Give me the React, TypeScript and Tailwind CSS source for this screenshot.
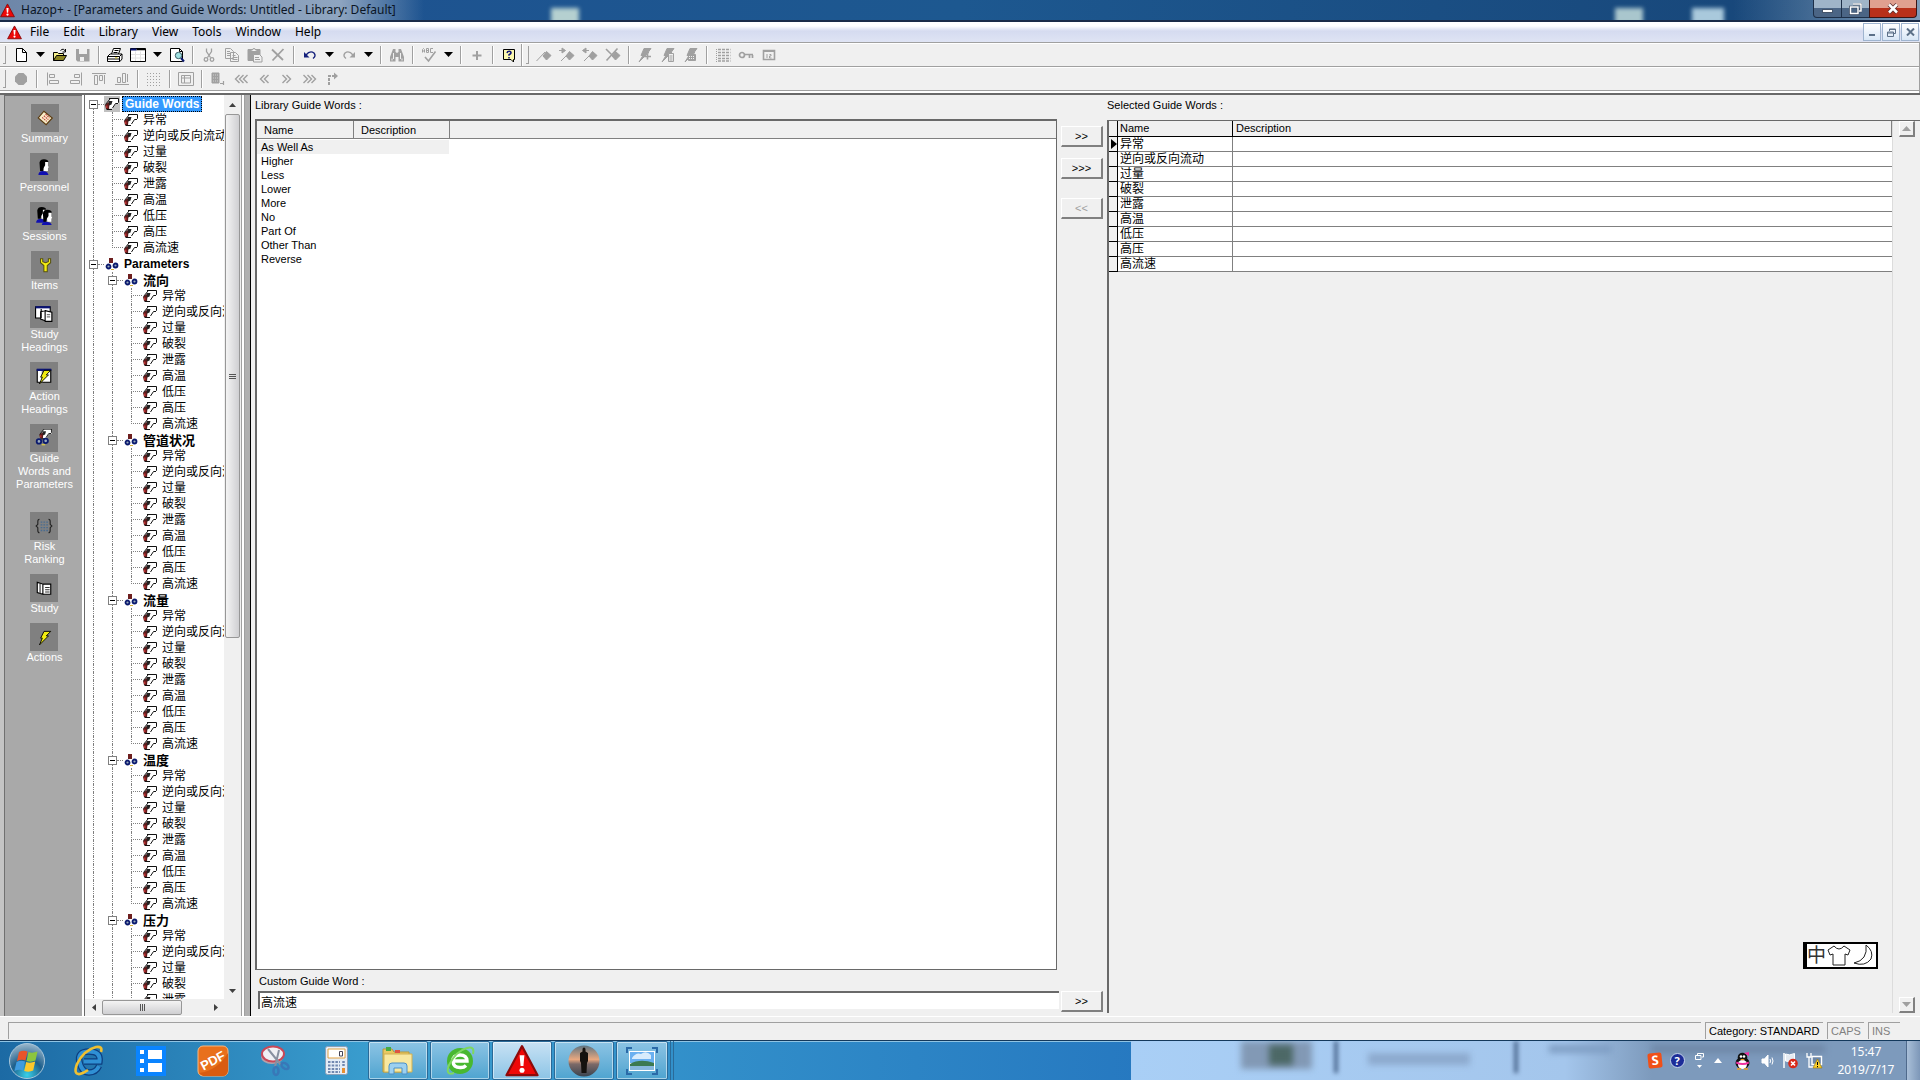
import { ReactNode, useState } from "react";
import clsx from "clsx";

const GUIDE_WORDS = ["异常", "逆向或反向流动", "过量", "破裂", "泄露", "高温", "低压", "高压", "高流速"];
const PARAMETERS = ["流向", "管道状况", "流量", "温度", "压力"];
const LIBRARY_WORDS = ["As Well As", "Higher", "Less", "Lower", "More", "No", "Part Of", "Other Than", "Reverse"];
const MENUS = ["File", "Edit", "Library", "View", "Tools", "Window", "Help"];

interface IconProps {
    children: ReactNode;
    size?: number;
    className?: string;
}

// 16x16 pixel style icon, grey by default like the disabled toolbar buttons
const Icon = ({ children, size = 16, className = "text-[#a0a0a0]" }: IconProps) => (
    <svg
        width={size}
        height={size}
        viewBox="0 0 16 16"
        fill="none"
        stroke="currentColor"
        strokeWidth="1"
        className={clsx("shrink-0", className)}
        aria-hidden="true"
    >
        {children}
    </svg>
);

const WarningIcon = ({ size }: { size: number }) => (
    <svg width={size} height={size} viewBox="0 0 24 24" className="shrink-0" aria-hidden="true">
        <path d="M12 1.500 23 22H1Z" fill="#ee0808" stroke="#8d0a0a" strokeWidth="1.5" strokeLinejoin="round" />
        <path d="M10.300 8h3.400l-.7 7.500h-2Z" fill="#fff" />
        <circle cx="12" cy="18.500" r="1.800" fill="#fff" />
    </svg>
);

const WordShape = () => (
    <>
        <path d="M6 3h9v4l-1 1h-2.500L8.500 12.500H2V8.500Z" fill="#fff" stroke="none" />
        <path d="M5 2.500h9.500v4l-1 1M14 7.500h-2.500L8.500 12" stroke="#111" />
        <path d="M1 9l3.500-3 1 2-.5 5H2Z" fill="#5e1a1a" stroke="none" />
        <path d="M4.500 5h4l-1 3.500L5 9.500Z" fill="#222" stroke="none" />
        <path d="M2 9.500h1.500v2.500H2Z" fill="#b33" stroke="none" />
        <path d="M1.500 8.500 6 3M2.500 13.500h5.500" stroke="#111" />
    </>
);

const WordIcon = () => (
    <Icon>
        <WordShape />
    </Icon>
);

const ParamIcon = () => (
    <Icon>
        <path d="M5 2h4v5H5Z" fill="#6d1f1f" stroke="none" />
        <circle cx="4.500" cy="10.500" r="2" fill="#9ab" stroke="#0b1a6e" strokeWidth="1.800" />
        <circle cx="11.500" cy="9.500" r="2" fill="#9ab" stroke="#0b1a6e" strokeWidth="1.800" />
        <path d="M7 13.500h3" stroke="#d8b53a" />
    </Icon>
);

interface ToolButtonProps {
    label: string;
    children: ReactNode;
}

const ToolButton = ({ label, children }: ToolButtonProps) => (
    <button aria-label={label} className="flex h-5 w-[23px] shrink-0 items-center justify-center">
        {children}
    </button>
);

const ToolArrow = () => (
    <button aria-label="More options" className="flex h-5 w-4 shrink-0 items-center justify-center">
        <svg width="9" height="5" viewBox="0 0 9 5">
            <path d="M0 0h9L4.500 5Z" fill="#000" />
        </svg>
    </button>
);

const ToolSeparator = () => (
    <span className="flex w-[9px] shrink-0 justify-center">
        <span className="h-[18px] w-[2px] border-l border-[#a0a0a0] bg-white" />
    </span>
);

const ToolGrip = () => <span className="mr-[3px] h-[18px] w-[3px] shrink-0 border-r border-b border-[#a0a0a0]" />;

const Chevrons = ({ count, left }: { count: number; left?: boolean }) => (
    <Icon>
        {Array.from({ length: count }, (_, i) => {
            const x = 7.5 - count * 2 + i * 4;
            return <path key={i} d={left ? `M${x + 5} 4l-4 4 4 4` : `M${x} 4l4 4-4 4`} strokeWidth="1.400" />;
        })}
    </Icon>
);

const Diamond = ({ children }: { children?: ReactNode }) => (
    <Icon>
        <path d="M10.500 4.500l4.500 4-4.500 4.500L7 9Z" fill="currentColor" />
        {children}
    </Icon>
);

const Bolt = ({ children }: { children: ReactNode }) => (
    <Icon>
        <path d="M7 1.500h7L11 5.500h1L8 9l-6 6 4-6.500H4Z" fill="currentColor" />
        {children}
    </Icon>
);

const MainToolbar = () => (
    <div className="flex h-6 items-center border-t border-[#a0a0a0] pl-[3px] shadow-[inset_0_1px_0_#fff]">
        <ToolGrip />
        <ToolButton label="New">
            <Icon className="text-black">
                <path d="M3.500 1.500h6l4 4v9h-10Z" fill="#fff" />
                <path d="M9.500 1.500v4h4" />
            </Icon>
        </ToolButton>
        <ToolArrow />
        <ToolButton label="Open">
            <Icon className="text-black">
                <path d="M1.500 13.500v-8h4l1 1h5v2" fill="#f5f08a" />
                <path d="M1.500 13.500 4.500 8.500h10l-3 5Z" fill="#8b8420" />
                <path d="M8.500 3.500q3-3 5 1M13.500 2v3h-3" />
            </Icon>
        </ToolButton>
        <ToolButton label="Save">
            <Icon>
                <path d="M1 2h13.500v12.500H2.500L1 13Z" fill="currentColor" stroke="none" />
                <path d="M4 2h8v5H4ZM5 10h4v4H5Z" fill="#f0f0f0" stroke="none" />
            </Icon>
        </ToolButton>
        <ToolSeparator />
        <ToolButton label="Print">
            <Icon className="text-black">
                <path d="M4.500 7 6.500 1.500h7l-2 5.500" fill="#fff" />
                <path d="M7.500 3.500h4M6.500 5.500h4" />
                <path d="M.5 9.500 3 7h12v5l-2 2.500H.5Z" fill="#fff" />
                <path d="M.5 9.500h12l2.500-2.500M.5 12h12M12.500 9.500v5" />
                <path d="M8 10.800h2.500" stroke="#d8c820" />
            </Icon>
        </ToolButton>
        <ToolButton label="Table">
            <Icon className="text-black">
                <path d="M.5 1.500h15v13H.5Z" fill="#fff" />
                <path d="M.5 2.500h6" stroke="#0b1474" strokeWidth="2" />
                <path d="M6.500 2.500h9" strokeWidth="1.500" />
                <path d="M5.500 4.500v9.500M10.500 4.500v9.500M1 7.500h14M1 11h14" stroke="#e2e2e2" />
            </Icon>
        </ToolButton>
        <ToolArrow />
        <ToolButton label="Preview">
            <Icon className="text-black">
                <path d="M1.500 1.500h9l3 3v10h-12Z" fill="#fff" />
                <path d="M10.500 1.500v3h3" />
                <circle cx="9.500" cy="8.500" r="3.200" fill="#9fe0e0" stroke="#3c5d66" />
                <path d="M12 11l3 3.500" stroke="#0b1a6e" strokeWidth="2" />
            </Icon>
        </ToolButton>
        <ToolSeparator />
        <ToolButton label="Cut">
            <Icon>
                <path d="M5.500 1.500v3l4 6M10.500 1.500v3l-4 6" strokeWidth="1.300" />
                <circle cx="5" cy="12.500" r="1.800" strokeWidth="1.300" />
                <circle cx="11" cy="12.500" r="1.800" strokeWidth="1.300" />
            </Icon>
        </ToolButton>
        <ToolButton label="Copy">
            <Icon>
                <path d="M1.500 1.500h5l3 3v7h-8ZM6.500 5.500h5l3 3v6h-8Z" fill="#f0f0f0" />
                <path d="M3 4.500h3M3 6.500h3M3 8.500h3M8.500 8.500h3M8.500 10.500h5M8.500 12.500h5" />
            </Icon>
        </ToolButton>
        <ToolButton label="Paste">
            <Icon>
                <path d="M1 2.500h12v11H1Z" fill="currentColor" />
                <path d="M4 4.500h6V3H8.500a1.500 1.500 0 0 0-3 0H4Z" fill="#f0f0f0" />
                <path d="M6.500 7.500h6l2.500 2.500v5H6.500Z" fill="#f0f0f0" />
                <path d="M8 10.500h4M8 12.500h5" />
            </Icon>
        </ToolButton>
        <ToolButton label="Delete">
            <Icon>
                <path d="M2 2.500 13 13M13.500 2 2.500 13.500" strokeWidth="1.800" />
            </Icon>
        </ToolButton>
        <ToolSeparator />
        <ToolButton label="Undo">
            <Icon className="text-[#14207c]">
                <path d="M4 8Q8 3 12 6q2.500 3-1 5.500" strokeWidth="1.400" />
                <path d="M2 5v5.500h5.500Z" fill="currentColor" stroke="none" />
            </Icon>
        </ToolButton>
        <ToolArrow />
        <ToolButton label="Redo">
            <Icon>
                <path d="M12 8Q8 3 4 6q-2.500 3 1 5.500" strokeWidth="1.400" />
                <path d="M14 5v5.500H8.500Z" fill="currentColor" stroke="none" />
            </Icon>
        </ToolButton>
        <ToolArrow />
        <ToolSeparator />
        <ToolButton label="Find">
            <Icon>
                <path d="M4 2h2.500v3L8 6l1.500-1V2H12l3 8v4.500H9.500V10h-3v4.500H1V10Z" fill="currentColor" stroke="none" />
                <path d="M4.500 6v6M11.500 6v6M3 11.500v2M13 11.500v2" stroke="#f0f0f0" />
            </Icon>
        </ToolButton>
        <ToolSeparator />
        <ToolButton label="Spelling">
            <Icon>
                <path d="M1.500 5.500v-3l1-1 1 1v3M1.500 4h2M5.500 5.500v-4h2v4ZM5.500 3.500h2M12 1.500H9.500v4H12" />
                <path d="M4 10l3.500 4L14.500 4.500" strokeWidth="1.600" />
            </Icon>
        </ToolButton>
        <ToolArrow />
        <ToolSeparator />
        <ToolButton label="Add">
            <Icon>
                <path d="M8 4v9M3.500 8.500h9" strokeWidth="2" />
            </Icon>
        </ToolButton>
        <ToolSeparator />
        <ToolButton label="Help">
            <Icon className="text-black">
                <path d="M2.500 2.500h11v10h-1V15l-2.500-2.500H2.500Z" fill="#fbf8b0" />
                <path d="M6 6q.3-1.700 2.300-1.700Q10.200 4.300 10 6q-.2 1-2 1.800v1M8 10v1.500" strokeWidth="1.500" stroke="#10157a" />
            </Icon>
        </ToolButton>
        <span className="mr-[3px] ml-px h-[22px] w-[2px] border-l border-[#a0a0a0] bg-white" />
        <ToolGrip />
        <ToolButton label="Insert node">
            <Diamond>
                <path d="M.5 14 9 5" />
            </Diamond>
        </ToolButton>
        <ToolButton label="Next node">
            <Diamond>
                <path d="M0 3.500h4M2 14l9-9" />
                <path d="M3 1 6.500 3.500 3 6Z" fill="currentColor" />
            </Diamond>
        </ToolButton>
        <ToolButton label="Previous node">
            <Diamond>
                <path d="M3 3.500h4M2 14l9-9" />
                <path d="M4 1 .5 3.500 4 6Z" fill="currentColor" />
            </Diamond>
        </ToolButton>
        <ToolButton label="Remove node">
            <Diamond>
                <path d="M1 2l9 9M12.500 1.500 1.500 13.500" strokeWidth="1.600" />
            </Diamond>
        </ToolButton>
        <ToolSeparator />
        <ToolButton label="New action">
            <Bolt>
                <path d="M6 9.500h8M10.500 7v5.500" strokeWidth="1.600" />
            </Bolt>
        </ToolButton>
        <ToolButton label="Action list">
            <Bolt>
                <path d="M8.500 6.500h5v8h-5Z" fill="#f0f0f0" />
                <path d="M9.500 9h3M9.500 11h3M9.500 13h3" />
            </Bolt>
        </ToolButton>
        <ToolButton label="Action grid">
            <Bolt>
                <path d="M5.500 7.500h7v6h-7Z" fill="currentColor" />
                <path d="M6 9.500h6M6 11.500h6" stroke="#f0f0f0" strokeDasharray="1 1" />
            </Bolt>
        </ToolButton>
        <ToolSeparator />
        <ToolButton label="Worksheet">
            <Icon>
                <path d="M3 2.500h12.500M3 5.500h12.500M3 8.500h12.500M3 11.500h12.500M3 14h12.500" strokeDasharray="3 1" strokeWidth="1.400" />
                <path d="M1.500 2v13" strokeDasharray="1 1" />
            </Icon>
        </ToolButton>
        <ToolButton label="Key">
            <Icon>
                <circle cx="4" cy="8" r="2.500" strokeWidth="1.700" />
                <path d="M6.500 7.500H15M11.500 8v3M14.500 8v3" strokeWidth="1.700" />
            </Icon>
        </ToolButton>
        <ToolButton label="Calendar">
            <Icon>
                <path d="M2.500 3.500h11v9h-11Z" strokeWidth="1.600" />
                <path d="M2 4h12" strokeWidth="2" />
                <path d="M6 7v4M8.500 7.500H10V9H8.500v2H10.500" />
            </Icon>
        </ToolButton>
    </div>
);

const FormatToolbar = () => (
    <div className="flex h-6 items-center border-t border-[#a0a0a0] pl-[3px] shadow-[inset_0_1px_0_#fff]">
        <ToolGrip />
        <ToolButton label="Record">
            <Icon>
                <path d="M5.500 2h5L14 5.500v5L10.500 14h-5L2 10.500v-5Z" fill="currentColor" stroke="none" />
            </Icon>
        </ToolButton>
        <ToolSeparator />
        <ToolButton label="Align left">
            <Icon>
                <path d="M2.500 1.500v13M4.500 3.500h5v3h-5ZM4.500 9.500h9v3h-9Z" />
            </Icon>
        </ToolButton>
        <ToolButton label="Align right">
            <Icon>
                <path d="M13.500 1.500v13M6.500 3.500h5v3h-5ZM2.500 9.500h9v3h-9Z" />
            </Icon>
        </ToolButton>
        <ToolButton label="Align top">
            <Icon>
                <path d="M1 2.500h14M3.500 4.500h3v9h-3ZM8.500 4.500h3v5h-3ZM13.500 4v9" />
            </Icon>
        </ToolButton>
        <ToolButton label="Align bottom">
            <Icon>
                <path d="M1 13.500h14M3.500 6.500h3v5h-3ZM8.500 2.500h3v9h-3ZM13.500 3v8" />
            </Icon>
        </ToolButton>
        <ToolSeparator />
        <ToolButton label="Grid">
            <Icon>
                <path d="M1 2.500h14M1 5.500h14M1 8.500h14M1 11.500h14M1 14.500h14" strokeDasharray="1 2" />
            </Icon>
        </ToolButton>
        <ToolSeparator />
        <ToolButton label="Frame">
            <Icon>
                <path d="M.5 1.500h15v13H.5Z" />
                <path d="M3.500 4.500h9v7.500h-9ZM3.500 7h9M6.500 4.500V12" />
            </Icon>
        </ToolButton>
        <ToolSeparator />
        <ToolButton label="Fill">
            <Icon>
                <path d="M2 2h7v10H2Z" fill="currentColor" />
                <path d="M3 4h5M3 7h5M3 10h5" stroke="#d0d0d0" strokeDasharray="1 1" />
                <path d="M10 12.500h4M13.500 10v4" strokeWidth="1.200" />
            </Icon>
        </ToolButton>
        <ToolButton label="First">
            <Chevrons count={3} left />
        </ToolButton>
        <ToolButton label="Previous">
            <Chevrons count={2} left />
        </ToolButton>
        <ToolButton label="Next">
            <Chevrons count={2} />
        </ToolButton>
        <ToolButton label="Last">
            <Chevrons count={3} />
        </ToolButton>
        <ToolButton label="Go to">
            <Icon>
                <path d="M4 14V5h6" strokeWidth="2" strokeDasharray="3 1" />
                <path d="M9 1.500 13 5 9 8.500Z" fill="currentColor" stroke="none" />
            </Icon>
        </ToolButton>
    </div>
);

const PersonShape = () => (
    <>
        <path d="M3 15q0-3 3.500-3.500l3 .5q2 .5 2.500 3Z" fill="#1010b0" stroke="none" />
        <path d="M7 3h4.500v4l.8 1-.8 1v2.500H8Z" fill="#fff" stroke="none" />
        <path d="M4 4q.5-3 4-3t4 2.500H9v3L7.500 9l-.5 2.500H4.500Z" fill="#000" stroke="none" />
    </>
);

const SHEET = <path d="M2 2.500h12v11H2Z" fill="#fff" stroke="#000" />;
const BOLT = <path d="M8 3h6l-4 4h2L4 15l2.500-6H5Z" fill="#f2ec10" stroke="#000" strokeWidth=".8" />;

const NAV_ITEMS: { lines: string[]; icon: ReactNode }[] = [
    {
        lines: ["Summary"],
        icon: (
            <>
                <path d="M7 2 14.500 8 9 14 2 8Z" fill="#f8eec8" stroke="#5a3a10" />
                <path d="M5.500 7.500l4 3.500M7 6l4 3.500M8.500 4.500l3.500 3.500" stroke="#c04040" strokeDasharray="1.500 .7" />
            </>
        ),
    },
    { lines: ["Personnel"], icon: <PersonShape /> },
    {
        lines: ["Sessions"],
        icon: (
            <>
                <g transform="translate(-2 -1)">
                    <PersonShape />
                </g>
                <g transform="translate(3 1.500)">
                    <PersonShape />
                </g>
            </>
        ),
    },
    {
        lines: ["Items"],
        icon: (
            <path
                d="M4 2.500v3.500l3 2.500v5.500h3V8.500L13 6V2.500h-2V5L8.500 6 6 5V2.500Z"
                fill="#f5ee12"
                stroke="#555010"
                strokeWidth=".9"
            />
        ),
    },
    {
        lines: ["Study", "Headings"],
        icon: (
            <>
                <path d="M.5 1.500h13v10H.5Z" fill="#fff" stroke="#000" />
                <path d="M.5 2h13" stroke="#0b1474" strokeWidth="2" />
                <path d="M5.500 3.500v8M5 6l4-1v9l-4-1.500ZM9 5l6 1.500v8H9Z" fill="#fff" stroke="#000" />
                <path d="M10.500 8.500h3M10.500 10.500h3" stroke="#777" />
            </>
        ),
    },
    {
        lines: ["Action", "Headings"],
        icon: (
            <>
                {SHEET}
                <path d="M1.500 2.500h13" stroke="#0b1474" strokeWidth="2" />
                <path d="M6.500 3.500v10" stroke="#777" />
                {BOLT}
            </>
        ),
    },
    {
        lines: ["Guide", "Words and", "Parameters", "\u00a0"],
        icon: (
            <>
                <g transform="translate(3 -2) scale(.8)">
                    <WordShape />
                </g>
                <circle cx="3.500" cy="11" r="2" fill="#9ab" stroke="#0b1a6e" strokeWidth="1.600" />
                <circle cx="9.500" cy="10.500" r="2" fill="#9ab" stroke="#0b1a6e" strokeWidth="1.600" />
                <path d="M6 14h3" stroke="#e8d53a" />
            </>
        ),
    },
    {
        lines: ["Risk", "Ranking"],
        icon: (
            <>
                <path
                    d="M4 2Q2.500 2 2.500 4v2.500L1 8l1.500 1.500V12q0 2 1.500 2M12 2q1.500 0 1.500 2v2.500L15 8l-1.500 1.500V12q0 2-1.500 2"
                    stroke="#222"
                />
                <path d="M5 4.500h6.500M5 7h6.500M5 9.500h6.500M5 12h6.500" stroke="#4a6c90" strokeDasharray="1.500 1" strokeWidth="1.200" />
            </>
        ),
    },
    {
        lines: ["Study"],
        icon: (
            <>
                <path d="M2 3l5 1.500v9L2 12ZM7 4.500h7v9H7Z" fill="#fff" stroke="#000" />
                <path d="M4.500 4v9M9 7.500h4M9 9.500h4M9 11.500h4" stroke="#333" />
            </>
        ),
    },
    { lines: ["Actions"], icon: BOLT },
];

const NavBar = () => (
    <nav className="flex w-[84px] shrink-0 flex-col items-center gap-2 overflow-hidden border-r-2 border-l-4 border-r-white border-l-[#c4c4c4] bg-[#a9a9a9] pt-[9px] pl-[3px] shadow-[inset_1px_1px_0_#707070]">
        {NAV_ITEMS.map((item) => (
            <button key={item.lines.join(" ")} className="flex flex-col items-center text-[11px] leading-[13px] text-white">
                <span className="flex h-7 w-7 items-center justify-center bg-[#808080]">
                    <Icon size={18}>{item.icon}</Icon>
                </span>
                {item.lines.map((line) => (
                    <span key={line} className="block whitespace-nowrap">
                        {line}
                    </span>
                ))}
            </button>
        ))}
    </nav>
);

type Guide = "line" | "tee" | "end" | "box" | "boxTop";

const GuideCell = ({ kind }: { kind: Guide }) => {
    if (kind === "box" || kind === "boxTop") {
        return (
            <span className="flex h-4 w-[19px] shrink-0 items-center pl-1">
                <span className="flex h-full w-[9px] flex-col items-center">
                    <span className={clsx("h-[4px]", kind === "box" && "border-l border-dotted border-[#808080]")} />
                    <span className="flex h-[9px] w-[9px] items-center justify-center border border-[#808080] bg-white">
                        <span className="h-px w-[5px] bg-black" />
                    </span>
                    <span className="h-[3px] border-l border-dotted border-[#808080]" />
                </span>
                <span className="w-[6px] border-t border-dotted border-[#808080]" />
            </span>
        );
    }
    return (
        <span className="flex h-4 w-[19px] shrink-0 flex-col pl-2">
            <span className={clsx("h-2 border-l border-dotted border-[#808080]", kind !== "line" && "border-b")} />
            <span className={clsx("h-2 border-dotted border-[#808080]", kind !== "end" && "border-l")} />
        </span>
    );
};

interface TreeRowProps {
    guides: Guide[];
    label: string;
    group?: boolean;
    heading?: boolean;
    selected?: boolean;
    onSelect: () => void;
}

const TreeRow = ({ guides, label, group, heading, selected, onSelect }: TreeRowProps) => (
    <li role="treeitem" aria-selected={selected} className="flex h-4 items-center whitespace-nowrap" onClick={onSelect}>
        {guides.map((kind, i) => (
            <GuideCell key={i} kind={kind} />
        ))}
        <span className={clsx("flex w-4 shrink-0 justify-center", selected && "bg-[#c0c0c0]")}>
            {group ? <ParamIcon /> : <WordIcon />}
        </span>
        <span
            className={clsx(
                "ml-[2px] h-4 px-[2px]",
                heading && "text-xs font-bold",
                group && !heading && "text-[13px] font-bold",
                !group && !heading && "text-xs",
                selected ? "border border-dotted border-black bg-[#3399ff] leading-[14px] text-white" : "leading-[17px]",
            )}
        >
            {label}
        </span>
    </li>
);

const Tree = () => {
    const [selected, setSelected] = useState("root");
    const row = (id: string) => ({ selected: selected === id, onSelect: () => setSelected(id) });
    const last = GUIDE_WORDS.length - 1;

    return (
        <div className="flex w-[157px] shrink-0 flex-col border-l border-[#696969]">
            <div className="flex min-h-0 flex-1">
                <ul role="tree" className="min-w-0 flex-1 overflow-hidden bg-white pt-px">
                    <TreeRow guides={["boxTop"]} label="Guide Words" heading {...row("root")} />
                    {GUIDE_WORDS.map((word, i) => (
                        <TreeRow key={word} guides={["line", i === last ? "end" : "tee"]} label={word} {...row(word)} />
                    ))}
                    <TreeRow guides={["box"]} label="Parameters" heading group {...row("params")} />
                    {PARAMETERS.map((param) => [
                        <TreeRow key={param} guides={["line", "box"]} label={param} group {...row(param)} />,
                        ...GUIDE_WORDS.map((word, i) => (
                            <TreeRow
                                key={param + word}
                                guides={["line", "line", i === last ? "end" : "tee"]}
                                label={word}
                                {...row(param + word)}
                            />
                        )),
                    ])}
                </ul>
                <div className="mr-px flex w-4 shrink-0 flex-col items-center bg-[#f0f0f0]">
                    <button aria-label="Scroll up" className="flex h-[19px] items-center">
                        <svg width="7" height="4" viewBox="0 0 7 4">
                            <path d="M0 4h7L3.500 0Z" fill="#404040" />
                        </svg>
                    </button>
                    <div className="flex h-[58%] w-[15px] flex-col items-center justify-center gap-px rounded-xs border border-[#979797] bg-linear-to-r from-[#f4f4f4] to-[#cfcfd2]">
                        <span className="h-px w-[7px] bg-[#555]" />
                        <span className="h-px w-[7px] bg-[#555]" />
                        <span className="h-px w-[7px] bg-[#555]" />
                    </div>
                    <div className="flex-1" />
                    <button aria-label="Scroll down" className="flex h-[17px] items-center">
                        <svg width="7" height="4" viewBox="0 0 7 4">
                            <path d="M0 0h7L3.500 4Z" fill="#404040" />
                        </svg>
                    </button>
                </div>
            </div>
            <div className="flex h-[17px] items-center bg-[#f0f0f0] pr-4">
                <button aria-label="Scroll left" className="flex w-[17px] justify-center">
                    <svg width="4" height="7" viewBox="0 0 4 7">
                        <path d="M4 0v7L0 3.500Z" fill="#404040" />
                    </svg>
                </button>
                <div className="flex h-[15px] w-20 items-center justify-center gap-px rounded-xs border border-[#979797] bg-linear-to-b from-[#f4f4f4] to-[#cfcfd2]">
                    <span className="h-[7px] w-px bg-[#555]" />
                    <span className="h-[7px] w-px bg-[#555]" />
                    <span className="h-[7px] w-px bg-[#555]" />
                </div>
                <div className="flex-1" />
                <button aria-label="Scroll right" className="flex w-[18px] justify-center">
                    <svg width="4" height="7" viewBox="0 0 4 7">
                        <path d="M0 0v7l4-3.500Z" fill="#404040" />
                    </svg>
                </button>
            </div>
        </div>
    );
};

interface PushButtonProps {
    label: string;
    children: ReactNode;
    disabled?: boolean;
}

const PushButton = ({ label, children, disabled }: PushButtonProps) => (
    <button
        aria-label={label}
        disabled={disabled}
        className="h-[21px] w-[42px] shrink-0 border-t border-r-2 border-b-2 border-l border-t-white border-r-[#808080] border-b-[#808080] border-l-white bg-[#f0f0f0] text-[11px] leading-4 disabled:text-[#a0a0a0]"
    >
        {children}
    </button>
);

const LibraryPanel = () => (
    <section className="flex min-w-0 flex-[853] flex-col pb-[4px] pl-1">
        <h2 className="h-[24px] text-[11px] leading-[21px]">Library Guide Words :</h2>
        <div className="flex min-h-0 flex-1">
            <div className="min-w-0 flex-1 border-t-2 border-r border-b border-l-2 border-[#696969] bg-white">
                <div className="flex h-[18px] border-b border-[#808080] bg-[#f0f0f0]">
                    <span className="w-[97px] border-r border-[#808080] pl-[7px] leading-[18px]">Name</span>
                    <span className="w-[96px] border-r border-[#808080] pl-[7px] leading-[18px]">Description</span>
                </div>
                <ul className="pt-px">
                    {LIBRARY_WORDS.map((word, i) => (
                        <li key={word} className={clsx("h-[14px] w-48 pl-1 leading-[15px]", i === 0 && "bg-[#f0f0f0]")}>
                            {word}
                        </li>
                    ))}
                </ul>
            </div>
            <div className="flex w-[50px] shrink-0 flex-col items-start pt-[7px] pl-1">
                <PushButton label="Add selected word">&gt;&gt;</PushButton>
                <div className="h-[11px]" />
                <PushButton label="Add all words">&gt;&gt;&gt;</PushButton>
                <div className="h-[19px]" />
                <PushButton label="Remove word" disabled>
                    &lt;&lt;
                </PushButton>
            </div>
        </div>
        <label htmlFor="custom-word" className="h-[21px] pl-[4px] leading-[23px]">
            Custom Guide Word :
        </label>
        <div className="flex pr-1 pl-[3px]">
            <input
                id="custom-word"
                type="text"
                defaultValue="高流速"
                className="mr-[2px] h-[18px] min-w-0 flex-1 border-t-2 border-l-2 border-[#696969] bg-white px-px text-xs outline-none"
            />
            <PushButton label="Add custom word">&gt;&gt;</PushButton>
        </div>
    </section>
);

const SCROLL_BUTTON =
    "flex h-4 w-4 items-center justify-center border-t border-r-2 border-b-2 border-l border-t-white border-r-[#808080] border-b-[#808080] border-l-white";

const SelectedPanel = () => (
    <section className="flex min-w-0 flex-[814] flex-col pb-[3px]">
        <h2 className="h-[25px] text-[11px] leading-[21px]">Selected Guide Words :</h2>
        <div className="flex min-h-0 flex-1 border-t border-l-2 border-[#696969]">
            <div className="min-w-0 flex-1 border-r border-[#dcdcdc]">
                <table className="w-full table-fixed border-separate border-spacing-0 text-left">
                    <colgroup>
                        <col className="w-[9px]" />
                        <col className="w-[115px]" />
                        <col />
                    </colgroup>
                    <thead>
                        <tr className="h-4 bg-[#f0f0f0]">
                            <th className="border-r border-b border-black p-0" />
                            <th className="border-r border-b border-black p-0 pl-[2px] leading-[15px] font-normal">Name</th>
                            <th className="border-r border-b border-black border-r-[#808080] p-0 pl-[3px] leading-[15px] font-normal">
                                Description
                            </th>
                        </tr>
                    </thead>
                    <tbody>
                        {GUIDE_WORDS.map((word, i) => (
                            <tr key={word} className="h-[15px]">
                                <td className="border-r border-b border-black bg-[#f0f0f0] p-0">
                                    {i === 0 && (
                                        <svg width="6" height="10" viewBox="0 0 6 10" className="ml-[2px] block">
                                            <path d="M0 0v10l6-5Z" fill="#000" />
                                        </svg>
                                    )}
                                </td>
                                <td className="border-r border-b border-[#808080] bg-white p-0 pl-[2px] text-xs leading-[14px]">{word}</td>
                                <td className="border-b border-[#808080] bg-white p-0" />
                            </tr>
                        ))}
                    </tbody>
                </table>
            </div>
            <div className="flex w-[27px] shrink-0 flex-col items-center justify-between">
                <button aria-label="Scroll up" className={SCROLL_BUTTON}>
                    <svg width="9" height="5" viewBox="0 0 9 5">
                        <path d="M0 5h9L4.500 0Z" fill="#a0a0a0" />
                    </svg>
                </button>
                <button aria-label="Scroll down" className={SCROLL_BUTTON}>
                    <svg width="9" height="5" viewBox="0 0 9 5">
                        <path d="M0 0h9L4.500 5Z" fill="#a0a0a0" />
                    </svg>
                </button>
            </div>
        </div>
    </section>
);

const TitleBar = () => (
    <header className="relative flex h-[22px] justify-between overflow-hidden border-b-2 border-[#1b2c48] bg-linear-to-r from-[#1e5090] via-[#1d5890] to-[#174476]">
        {/* desktop icons seen through the glass */}
        <span className="absolute top-2 left-[28.7%] h-4 w-7 bg-[#b5d0d0] blur-[2px]" />
        <span className="absolute top-2 left-[84.1%] h-4 w-7 bg-[#a9c6cd] blur-[2px]" />
        <span className="absolute top-2 left-[88.1%] h-4 w-8 bg-[#a9c9dc] blur-[2px]" />
        <div className="relative flex items-center bg-linear-to-r from-[#6d86a8] via-[#8fa5c0] via-80% to-transparent pr-7 text-xs">
            <WarningIcon size={15} />
            <h1 className="pl-[6px] leading-5 text-[#0b1524]">Hazop+ - [Parameters and Guide Words: Untitled - Library: Default]</h1>
        </div>
        <div className="relative flex items-start bg-linear-to-r from-transparent to-[#7f9cb8] pr-[3px] pl-20">
            <button
                aria-label="Minimize"
                className="flex h-[18px] w-[29px] items-center justify-center rounded-bl border border-t-0 border-[#1d2f48] bg-linear-to-b from-[#9fb4c8] from-50% to-[#4b6585] to-50%"
            >
                <span className="mt-1 h-[4px] w-[11px] border border-[#44546a] bg-white" />
            </button>
            <button
                aria-label="Restore"
                className="flex h-[18px] w-[27px] items-center justify-center border-b border-[#1d2f48] bg-linear-to-b from-[#9fb4c8] from-50% to-[#4b6585] to-50%"
            >
                <svg width="13" height="12" viewBox="0 0 13 12">
                    <path d="M4 1h8v7h-2M1 4h8v7H1Z" fill="none" stroke="#33425a" strokeWidth="2.500" />
                    <path d="M4 1h8v7h-2M1.500 4h7.500v6.500H1.500Z" fill="none" stroke="#fff" strokeWidth="1.500" />
                </svg>
            </button>
            <button
                aria-label="Close"
                className="flex h-[18px] w-12 items-center justify-center rounded-br border border-t-0 border-[#3a1414] bg-linear-to-b from-[#e0a090] from-45% to-[#b8301a] to-50%"
            >
                <svg width="12" height="11" viewBox="0 0 12 11">
                    <path d="M2 1.500l8 8M10 1.500l-8 8" stroke="#5a3030" strokeWidth="4" />
                    <path d="M2 1.500l8 8M10 1.500l-8 8" stroke="#fff" strokeWidth="2.500" />
                </svg>
            </button>
        </div>
    </header>
);

const MDI_BUTTON =
    "flex h-[18px] w-[18px] items-center justify-center border border-[#9fb4cf] bg-linear-to-b from-white to-[#d8e6f6] text-[#5c7088]";

const MenuBar = () => (
    <div className="flex h-5 items-center bg-linear-to-b from-white from-20% via-[#d5dbf0] via-45% to-[#dfe4f4] pl-[7px]">
        <WarningIcon size={15} />
        <div className="flex flex-1 gap-[14px] pl-2 text-xs leading-5">
            {MENUS.map((menu) => (
                <button key={menu}>{menu}</button>
            ))}
        </div>
        <div className="flex gap-px pr-px">
            <button aria-label="Minimize document" className={MDI_BUTTON}>
                <span className="mt-[5px] h-[2px] w-[6px] bg-[#5c7088]" />
            </button>
            <button aria-label="Restore document" className={MDI_BUTTON}>
                <svg width="9" height="9" viewBox="0 0 9 9" fill="none" stroke="currentColor">
                    <path d="M2.500 3V1h6v4.500H7M.5 4h6v4.500h-6ZM.5 5h6M2.500 1.500h6" />
                </svg>
            </button>
            <button aria-label="Close document" className={MDI_BUTTON}>
                <svg width="9" height="8" viewBox="0 0 9 8" stroke="currentColor" strokeWidth="2">
                    <path d="M1 .5l7 7M8 .5l-7 7" />
                </svg>
            </button>
        </div>
    </div>
);

const StatusBar = () => (
    <footer className="flex h-6 gap-1 border-t border-white bg-[#f0f0f0] pt-[5px] pr-5 pb-px pl-2 text-[11px] leading-4">
        <span className="flex-1 border-t border-l border-[#a0a0a0]" />
        <span className="w-[118px] border-t border-l border-[#a0a0a0] pl-[3px] whitespace-nowrap">Category: STANDARD</span>
        <span className="w-[37px] border-t border-l border-[#a0a0a0] pl-[3px] text-[#808080]">CAPS</span>
        <span className="w-8 border-t border-l border-[#a0a0a0] pl-[3px] text-[#808080]">INS</span>
    </footer>
);

const PINNED: { name: string; icon: ReactNode }[] = [
    {
        name: "Start",
        icon: (
            <svg width="38" height="38" viewBox="0 0 38 38">
                <defs>
                    <radialGradient id="orb" cx=".5" cy=".9" r=".9">
                        <stop offset="0" stopColor="#38d0e8" />
                        <stop offset=".5" stopColor="#1d5f8c" />
                        <stop offset="1" stopColor="#9cb8cc" />
                    </radialGradient>
                </defs>
                <circle cx="19" cy="19" r="17.500" fill="url(#orb)" stroke="#a8c6da" />
                <path d="M11 10q4-2 8.500-.5l-2 9q-4-1.500-8.500.5Z" fill="#e8542a" />
                <path d="M20.500 10q4 1.500 9-.5l-2 9q-4 2-9 .5Z" fill="#8cc63e" />
                <path d="M8.500 20q4-2 8.500-.5l-2 9q-4-1.500-8.500.5Z" fill="#3f9be0" />
                <path d="M18.200 20q4 1.500 9-.5l-2 9q-4 2-9 .5Z" fill="#fcc82c" />
            </svg>
        ),
    },
    {
        name: "Internet Explorer",
        icon: (
            <svg width="34" height="34" viewBox="0 0 34 34" fill="none">
                <path d="M27 22q-3 6.500-10 6.500T7.500 18 17 7.500 27.500 17.500H12" stroke="#0d3f80" strokeWidth="6.500" />
                <path d="M27 22q-3 6.500-10 6.500T7.500 18 17 7.500 27.500 17.500H12" stroke="#2f90d4" strokeWidth="4" />
                <path d="M29 8Q31 2 24 3 12 6 5 20q-4 11 3 10 4-1 8-4" stroke="#f0c030" strokeWidth="2.600" />
            </svg>
        ),
    },
    {
        name: "Launcher",
        icon: (
            <svg width="30" height="30" viewBox="0 0 30 30">
                <path d="M0 0h30v30H0Z" fill="#0a84ff" />
                <path d="M4 4h4v4H4ZM4 13h4v4H4ZM4 22h4v4H4ZM12 4h14v9H12ZM12 17h14v9H12Z" fill="#fff" />
            </svg>
        ),
    },
    {
        name: "PDF",
        icon: (
            <svg width="32" height="32" viewBox="0 0 32 32">
                <rect x="1" y="1" width="30" height="30" rx="5" fill="#e8701c" stroke="#f8b880" />
                <path d="M2 28Q20 26 31 8v18q-1 5-5 5H6Z" fill="#d85c10" />
                <text
                    x="16"
                    y="20"
                    textAnchor="middle"
                    transform="rotate(-28 16 16)"
                    fontSize="13"
                    fontWeight="bold"
                    fontFamily="Liberation Sans, sans-serif"
                    fill="#fff"
                >
                    PDF
                </text>
            </svg>
        ),
    },
    {
        name: "Snipping Tool",
        icon: (
            <svg width="32" height="32" viewBox="0 0 32 32" fill="none">
                <ellipse cx="13" cy="12" rx="11" ry="7" fill="#b8a0a8" />
                <ellipse cx="14" cy="9" rx="11" ry="7.500" fill="#f0f0f4" stroke="#c84858" strokeWidth="2" />
                <path d="M9 4l13 16M20 5l-4 17" stroke="#8890a0" strokeWidth="2" />
                <ellipse cx="17" cy="26" rx="2.500" ry="4" stroke="#3878b8" strokeWidth="2.500" />
                <ellipse cx="26" cy="21" rx="4" ry="2.500" transform="rotate(35 26 21)" stroke="#3878b8" strokeWidth="2.500" />
            </svg>
        ),
    },
    {
        name: "Calculator",
        icon: (
            <svg width="24" height="30" viewBox="0 0 24 30">
                <rect x=".5" y=".5" width="22" height="28" rx="2" fill="#e4edf6" stroke="#8aa0b8" />
                <path d="M3 3h17v9H3Z" fill="#fff" stroke="#e0a040" />
                <path d="M14.500 5.500h3v4.500h-3Z" fill="none" stroke="#445" />
                <path d="M3 16h12M3 19.500h12M3 23h12M3 26h12" stroke="#7088b0" strokeWidth="2" strokeDasharray="2.500 1.200" />
                <path d="M18.500 15v6" stroke="#7088b0" strokeWidth="2.500" strokeDasharray="2 1" />
                <path d="M18.500 22v5" stroke="#e89030" strokeWidth="3" />
            </svg>
        ),
    },
];

const RUNNING: { name: string; icon: ReactNode; active?: boolean; stacked?: boolean }[] = [
    {
        name: "Explorer",
        icon: (
            <svg width="34" height="32" viewBox="0 0 34 32">
                <path d="M2 4h9l2 3h15v20H2Z" fill="#e8c860" stroke="#b89838" />
                <path d="M5 2h5v4H5Z" fill="#4a4" />
                <path d="M14 5h5v3h-5Z" fill="#d54" />
                <path d="M3 9h28v18H3Z" fill="#f8e8a0" stroke="#d0b050" />
                <path d="M8 29v-8q0-3 3-3h12q3 0 3 3v8h-5v-6h-8v6Z" fill="#9cd0f0" stroke="#4a90c8" />
            </svg>
        ),
    },
    {
        name: "360 Browser",
        icon: (
            <svg width="32" height="32" viewBox="0 0 32 32" fill="none">
                <circle cx="16" cy="16" r="13" fill="#48b830" />
                <path d="M9 16h14q0-6-7-6t-7 6q0 7 8 6.500 3 0 5-2" stroke="#fff" strokeWidth="3.400" />
                <path d="M29 9Q31 1 23 3 12 6 5 20q-4 11 5 8" stroke="#7ed860" strokeWidth="2" />
            </svg>
        ),
    },
    { name: "Hazop+", icon: <WarningIcon size={34} />, active: true },
    {
        name: "Profile",
        icon: (
            <svg width="32" height="32" viewBox="0 0 32 32">
                <defs>
                    <linearGradient id="dusk" x2="0" y2="1">
                        <stop offset="0" stopColor="#5d7482" />
                        <stop offset=".45" stopColor="#e8a880" />
                        <stop offset=".6" stopColor="#7c6a68" />
                        <stop offset="1" stopColor="#3a4450" />
                    </linearGradient>
                </defs>
                <circle cx="16" cy="16" r="15.500" fill="url(#dusk)" />
                <path d="M14.500 4.500q0-2 1.500-2t1.500 2v2l2.500 1.500v8l-1 2-.5 10h-5l-.5-10-1-2V8l2.500-1.500Z" fill="#15120f" />
            </svg>
        ),
    },
    {
        name: "Picture Viewer",
        stacked: true,
        icon: (
            <svg width="32" height="30" viewBox="0 0 32 30">
                <path d="M3 5h26v20H3Z" fill="#fff" />
                <path d="M4 6h24v11H4Z" fill="#6ab0f0" />
                <path d="M6 12q4-6 9-4 5-4 10 1v4H6Z" fill="#d8ecfc" />
                <path d="M4 18q10-6 24-1v3H4Z" fill="#3c7a50" />
                <path d="M4 20h24v4H4Z" fill="#88b8dc" />
                <path d="M1 7V2h5M26 2h5v5M31 23v5h-5M6 28H1v-5" fill="none" stroke="#2a6aa8" strokeWidth="2" />
            </svg>
        ),
    },
];

const Tray = () => (
    <div className="relative flex shrink-0 items-center">
        <div className="flex items-center">
            <button aria-label="Input method" className="flex w-[22px] justify-center">
                <span className="h-[15px] w-[14px] -rotate-6 rounded-xs bg-[#f05018] text-center text-[13px] leading-[15px] font-bold text-white">
                    S
                </span>
            </button>
            <button aria-label="Help" className="flex w-[22px] justify-center">
                <span className="h-[15px] w-[15px] rounded-full border border-[#c8d4ec] bg-[#1c2c98] text-[11px] leading-[13px] font-bold text-white">
                    ?
                </span>
            </button>
            <button aria-label="Language bar" className="flex w-[22px] flex-col items-center gap-[5px]">
                <svg width="9" height="7" viewBox="0 0 9 7" fill="none" stroke="#fff">
                    <path d="M2.500 2V.5h6v3.500H7M.5 2.500h5.500v4H.5Z" />
                </svg>
                <svg width="5" height="3" viewBox="0 0 5 3">
                    <path d="M0 0h5L2.500 3Z" fill="#fff" />
                </svg>
            </button>
            <button aria-label="Show hidden icons" className="flex w-4 justify-center">
                <svg width="8" height="5" viewBox="0 0 8 5">
                    <path d="M0 5h8L4 0Z" fill="#fff" />
                </svg>
            </button>
            <button aria-label="QQ" className="flex w-8 justify-center">
                <svg width="17" height="18" viewBox="0 0 17 18">
                    <ellipse cx="8.500" cy="11" rx="7" ry="6" fill="#111" />
                    <circle cx="8.500" cy="5.500" r="4.800" fill="#111" />
                    <ellipse cx="8.500" cy="12.500" rx="4.500" ry="4.500" fill="#fff" />
                    <circle cx="7" cy="4.500" r="1.300" fill="#fff" />
                    <circle cx="10" cy="4.500" r="1.300" fill="#fff" />
                    <path d="M6 7h5l-2.500 1.500Z" fill="#f0a020" />
                    <path d="M2.500 9.500q6 3 12 0l.5 2q-6 3-13 0ZM10 1l5-1v4Z" fill="#f030a0" />
                    <path d="M3 17h4M10 17h4" stroke="#f0a020" strokeWidth="1.500" />
                </svg>
            </button>
            <button aria-label="Volume" className="flex w-5 justify-center">
                <svg width="14" height="14" viewBox="0 0 14 14" fill="none" stroke="#fff">
                    <path d="M1 5h2.500L7 1v12L3.500 9H1Z" fill="#fff" />
                    <path d="M9 5q1 2 0 4M11 3.500q2 3.500 0 7" />
                </svg>
            </button>
            <button aria-label="Action Center" className="flex w-6 justify-center">
                <svg width="17" height="17" viewBox="0 0 17 17">
                    <path d="M2 1v15" stroke="#fff" strokeWidth="1.500" />
                    <path d="M3.500 2q4 2 9-.5v7q-5 2-9 .5Z" fill="#fff" fillOpacity=".8" stroke="#fff" />
                    <circle cx="11" cy="11.500" r="4.800" fill="#d82818" />
                    <path d="M9 9.500l4 4M13 9.500l-4 4" stroke="#fff" strokeWidth="1.600" />
                </svg>
            </button>
            <button aria-label="Network" className="flex w-6 justify-center">
                <svg width="17" height="17" viewBox="0 0 17 17" fill="none">
                    <path d="M6 4.500h9.500v8H6Z" fill="#6c86a6" stroke="#fff" strokeWidth="1.400" />
                    <path d="M1 1v4h4V1M3 5v10h5" stroke="#fff" strokeWidth="1.300" />
                    <path d="M11.500 7l4.500 9H7Z" fill="#fad02c" stroke="#a07c10" strokeWidth=".7" />
                    <path d="M11.500 10v3M11.500 14v1.200" stroke="#000" />
                </svg>
            </button>
        </div>
        <button className="w-[80px] text-center text-xs leading-[18px] text-white">
            <span className="block">15:47</span>
            <span className="block">2019/7/17</span>
        </button>
        <button
            aria-label="Show desktop"
            className="h-full w-[14px] border-l border-[#4f6a8c] bg-linear-to-r from-[#a9bfd8] to-[#7d97b8]"
        />
    </div>
);

const Taskbar = () => (
    <div className="relative flex h-10 overflow-hidden border-t border-[#14395c] bg-linear-to-r from-[#1c6aa4] via-[#3b9fd0] via-20% to-[#2678c0] to-60% shadow-[inset_0_1px_0_#8fc4e4]">
        {/* blurred window behind the glass */}
        <div className="absolute inset-y-0 right-0 left-[58.9%] bg-linear-to-r from-[#a9cff6] via-[#a4c6ec] via-55% to-[#7d9abc] to-66%">
            <span className="absolute top-0 left-[14%] h-7 w-[9%] bg-[#8299b5] blur-[3px]" />
            <span className="absolute top-1 left-[17.500%] h-5 w-[3%] bg-[#4c6866] blur-[3px]" />
            <span className="absolute top-0 left-[25.700%] h-8 w-1 bg-[#4d6a90] blur-[2px]" />
            <span className="absolute top-3 left-[30%] h-3 w-[13%] bg-[#8daace] blur-[3px]" />
            <span className="absolute top-0 left-[48.500%] h-8 w-1 bg-[#4d6a90] blur-[2px]" />
            <span className="absolute top-1 left-[53%] h-2 w-[8%] bg-[#7f9ec4] blur-[3px]" />
            <span className="absolute top-1 left-[66%] h-2 w-[22%] bg-[#6f88a8] blur-[3px]" />
        </div>
        <div className="relative flex flex-1">
            {PINNED.map((app, i) => (
                <button
                    key={app.name}
                    aria-label={app.name}
                    className={clsx("flex items-center justify-center", i === 0 ? "w-[58px] pr-1" : "w-[62px]")}
                >
                    {app.icon}
                </button>
            ))}
            <div className="flex gap-[2px]">
                {RUNNING.map((app) => (
                    <button
                        key={app.name}
                        aria-label={app.name}
                        className={clsx(
                            "flex items-center justify-center rounded-xs border border-[#2a6a98] inset-ring inset-ring-white/50",
                            app.stacked ? "w-[52px]" : "w-[60px]",
                            app.active
                                ? "bg-linear-to-b from-[#c8e2f4] to-[#8cc4e6]"
                                : "bg-linear-to-b from-[#8cc4e4] to-[#4ea4d0]",
                        )}
                    >
                        {app.icon}
                    </button>
                ))}
                <span className="w-px bg-[#2a6a98]" />
                <span className="w-px bg-[#2a6a98]" />
            </div>
        </div>
        <Tray />
    </div>
);

const ImeBar = () => (
    <div className="absolute right-[42px] bottom-[111px] flex h-[27px] w-[75px] items-center border-2 border-l-4 border-black bg-white text-[#333]">
        <span className="text-[19px] leading-[23px]">中</span>
        <svg width="26" height="23" viewBox="0 0 26 23" fill="none" stroke="#222">
            <path d="M8 2q5 6 10 0l6 4-2 5-3-1v11H7V10l-3 1-2-5Z" />
        </svg>
        <svg width="23" height="23" viewBox="0 0 23 23" fill="none" stroke="#222">
            <path d="M14 1q8 6 5 14-6 8-17 4 14-3 12-18Z" />
        </svg>
    </div>
);

export default function App() {
    return (
        <div className="relative flex h-screen flex-col overflow-hidden bg-[#f0f0f0] font-['Liberation_Sans','Noto_Sans_CJK_SC',sans-serif] text-[11px] text-black">
            <div className="font-['Noto_Sans','Open_Sans',sans-serif]">
                <TitleBar />
                <MenuBar />
            </div>
            <div className="border-r border-[#a0a0a0]">
                <MainToolbar />
                <FormatToolbar />
                <div className="h-[3px] border-t border-[#a0a0a0] bg-white" />
            </div>
            <main className="flex min-h-0 flex-1 border-t-2 border-[#696969]">
                <NavBar />
                <Tree />
                <div className="flex w-[10px] shrink-0 cursor-col-resize border-r border-black bg-[#b0b0b0]">
                    <span className="w-1 border-x border-x-[#a0a0a0] bg-white" />
                </div>
                <LibraryPanel />
                <SelectedPanel />
            </main>
            <StatusBar />
            <div className="font-['Noto_Sans','Open_Sans',sans-serif]">
                <Taskbar />
            </div>
            <ImeBar />
        </div>
    );
}
